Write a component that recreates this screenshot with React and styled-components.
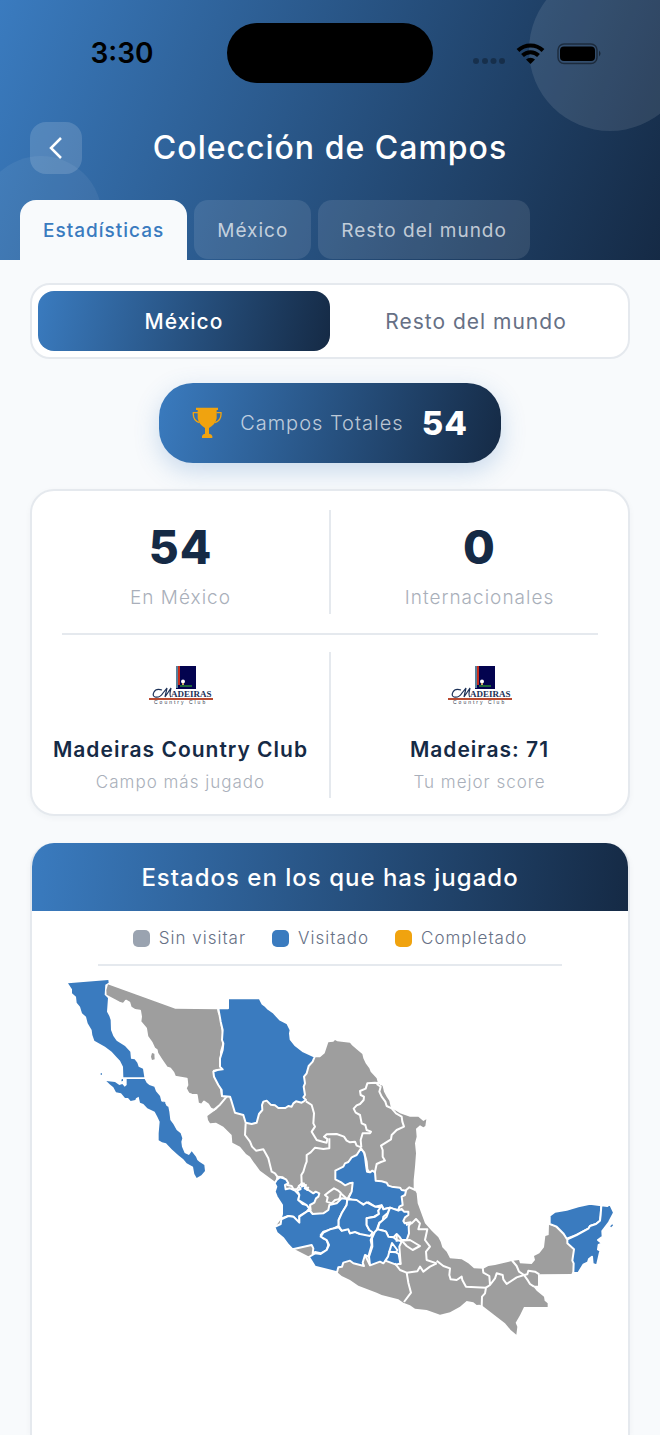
import React, { useState } from 'react';
import styled, { createGlobalStyle, css } from 'styled-components';

const palette = {
  blue: '#3a7bbf',
  navy: '#152a45',
  page: '#f8fafc',
  border: '#e5e9ee',
  slate: '#667085',
  muted: '#a9afba',
  gray: '#9e9e9e',
  gold: '#f0a30f',
};

const gradient = (angle) =>
  `linear-gradient(${angle}deg, ${palette.blue}, ${palette.navy})`;

const GlobalStyle = createGlobalStyle`
  * {
    box-sizing: border-box;
  }
  body {
    margin: 0;
    background: ${palette.page};
    font-family: Inter, 'Liberation Sans', sans-serif;
    letter-spacing: 1px;
  }
  button {
    border: none;
    padding: 0;
    background: none;
    font: inherit;
    letter-spacing: inherit;
    cursor: pointer;
  }
  h1, h2, p {
    margin: 0;
  }
`;

const Page = styled.div`
  min-height: 100vh;
  display: flex;
  flex-direction: column;
`;

const Header = styled.header`
  position: relative;
  overflow: hidden;
  background: ${gradient(111)};
`;

const Bubble = styled.div`
  position: absolute;
  width: ${({ $size }) => $size}px;
  height: ${({ $size }) => $size}px;
  border-radius: 50%;
  background: rgba(255, 255, 255, ${({ $alpha }) => $alpha});
  ${({ $corner }) =>
    $corner === 'top'
      ? css`
          top: -31px;
          right: -31px;
        `
      : css`
          bottom: -18px;
          left: -20px;
        `}
`;

const StatusBar = styled.div`
  position: relative;
  display: grid;
  grid-template-columns: 1fr 206px 1fr;
  align-items: center;
  padding-top: 23px;
`;

const Clock = styled.time`
  justify-self: center;
  padding-left: 17px;
  font-size: 28px;
  line-height: 60px;
  font-weight: 600;
  letter-spacing: 0;
`;

const Island = styled.div`
  height: 60px;
  border-radius: 30px;
  background: #000;
`;

const StatusIcons = styled.div`
  display: flex;
  align-items: center;
  padding: 2px 0 0 39px;
`;

const TitleRow = styled.div`
  position: relative;
  display: grid;
  grid-template-columns: 52px 1fr 52px;
  align-items: center;
  padding: 39px 30px 26px;
`;

const BackButton = styled.button`
  height: 52px;
  display: flex;
  align-items: center;
  justify-content: center;
  border-radius: 16px;
  background: rgba(255, 255, 255, 0.15);
`;

const Title = styled.h1`
  text-align: center;
  color: white;
  font-size: 32px;
  line-height: 40px;
  font-weight: 500;
`;

const Tabs = styled.nav`
  position: relative;
  display: flex;
  gap: 7px;
  padding: 0 20px;
`;

const Tab = styled.button`
  height: 59px;
  padding: 2px 23px 0;
  border-radius: 14px;
  background: rgba(255, 255, 255, 0.1);
  color: rgba(255, 255, 255, 0.7);
  font-size: 19px;
  line-height: 24px;
  ${({ $active }) =>
    $active &&
    css`
      border-radius: 16px 16px 0 0;
      height: 60px;
      background: ${palette.page};
      color: ${palette.blue};
      font-weight: 500;
    `}
`;

const Content = styled.main`
  flex: 1;
  display: flex;
  flex-direction: column;
  padding: 23px 30px 0;
`;

const Segment = styled.div`
  display: grid;
  grid-template-columns: 1fr 1fr;
  padding: 6px;
  border: 2px solid ${palette.border};
  border-radius: 20px;
  background: white;
`;

const SegmentButton = styled.button`
  height: 60px;
  padding-top: 2px;
  border-radius: 16px;
  color: ${palette.slate};
  font-size: 21px;
  line-height: 26px;
  ${({ $active }) =>
    $active &&
    css`
      background: ${gradient(102)};
      color: white;
      font-weight: 500;
    `}
`;

const TotalPill = styled.div`
  align-self: center;
  display: flex;
  align-items: center;
  height: 80px;
  margin: 24px 0 26px;
  padding: 0 33px;
  border-radius: 34px;
  background: ${gradient(103)};
  box-shadow: 0 8px 24px rgba(58, 123, 191, 0.25);
  color: rgba(255, 255, 255, 0.7);
  font-size: 20px;
  font-weight: 300;
  span {
    margin: 0 18px;
  }
  strong {
    color: white;
    font-size: 33px;
    font-weight: 800;
  }
`;

const Card = styled.section`
  border: 2px solid ${palette.border};
  border-radius: 24px;
  background: white;
  box-shadow: 0 2px 6px rgba(21, 42, 69, 0.04);
`;

const StatsRow = styled.div`
  display: grid;
  grid-template-columns: 1fr 2px 1fr;
  padding: ${({ $detail }) => ($detail ? '17px 0 16px' : '19px 0')};
`;

const RowDivider = styled.hr`
  height: 2px;
  margin: 0 30px;
  border: none;
  background: ${palette.border};
`;

const ColumnDivider = styled.div`
  background: ${palette.border};
`;

const Stat = styled.div`
  display: flex;
  flex-direction: column;
  align-items: center;
  text-align: center;
  color: ${palette.navy};
  svg {
    margin: 13px 0 30px;
  }
`;

const StatNumber = styled.strong`
  padding-top: 8px;
  font-size: 46px;
  line-height: 58px;
  font-weight: 800;
`;

const StatName = styled.strong`
  font-size: 21px;
  line-height: 28px;
  font-weight: 600;
`;

const StatLabel = styled.span`
  padding-top: ${({ $small }) => ($small ? 6 : 10)}px;
  padding-bottom: 4px;
  color: ${palette.muted};
  font-size: ${({ $small }) => ($small ? 17 : 19)}px;
  line-height: 24px;
  font-weight: 300;
`;

const MapCard = styled(Card)`
  flex: 1;
  margin-top: 27px;
  border-top: none;
  border-bottom: none;
  border-radius: 24px 24px 0 0;
  overflow: hidden;
  svg {
    display: block;
    width: calc(100% - 36px);
    margin: 4px 0 0 28px;
  }
`;

const MapTitle = styled.h2`
  padding-top: 1px;
  background: ${gradient(96)};
  color: white;
  text-align: center;
  font-size: 24px;
  line-height: 67px;
  font-weight: 500;
`;

const Legend = styled.ul`
  display: flex;
  justify-content: center;
  gap: 26px;
  list-style: none;
  margin: 0 66px;
  padding: 15px 0 14px;
  border-bottom: 2px solid ${palette.border};
  color: ${palette.slate};
  font-size: 17px;
  line-height: 24px;
  font-weight: 300;
`;

const LegendItem = styled.li`
  display: flex;
  align-items: center;
  gap: 9px;
  &::before {
    content: '';
    width: 17px;
    height: 17px;
    border-radius: 5px;
    background: ${({ $color }) => $color};
  }
`;

const SignalIcons = () => (
  <svg width="132" height="24" viewBox="0 0 132 24" aria-hidden="true">
    <g fill="#000" opacity="0.3">
      <circle cx="4" cy="19" r="3" />
      <circle cx="13" cy="19" r="3" />
      <circle cx="21.500" cy="19" r="3" />
      <circle cx="30" cy="19" r="3" />
    </g>
    <g fill="none" stroke="#000" strokeWidth="4">
      <path d="M46 8.500a18 18 0 0 1 25 0" />
      <path d="M50.500 13.500a11.500 11.500 0 0 1 16 0" />
    </g>
    <path d="M54 17.500a6.500 6.500 0 0 1 9 0L58.500 22z" />
    <rect x="86" y="2" width="39" height="19.500" rx="6" fill="none" stroke="#000" strokeWidth="1.500" opacity="0.45" />
    <rect x="88" y="4.500" width="35" height="14.500" rx="4" />
    <path d="M127 8.500q3 3 0 6z" opacity="0.5" />
  </svg>
);

const Trophy = () => (
  <svg width="30" height="32" viewBox="579 411 90 96" fill={palette.gold} aria-hidden="true">
    <path d="M591 413H657V420H653V445Q650 463 630 474V491Q638 492 640 498V504H609V498Q611 492 618 491V474Q599 463 596 445V420H591Z" />
    <path d="M597 428H583Q581 451 601 458M652 428H666Q668 451 648 458" fill="none" stroke={palette.gold} strokeWidth="4" />
  </svg>
);

const ClubLogo = () => (
  <svg width="66" height="41" viewBox="0 0 66 41" role="img" aria-label="Madeiras Country Club">
    <rect x="28" y="1" width="20" height="23" fill="#03034f" />
    <rect x="28" y="1" width="2" height="22" fill="#57809c" />
    <rect x="30" y="1" width="2" height="19" fill="#c62c1c" />
    <rect x="32" y="20" width="12" height="2" fill="#1d6538" />
    <circle cx="35" cy="16.500" r="2" fill="#fff" />
    <path d="M34 18h2v2h-2z" fill="#cfa36b" />
    <g fill="#1c3157" fontFamily="'Liberation Serif', serif" letterSpacing="0">
      <path d="M14 25q-6-2-8 2t1 5q5 1 8-4l4-5-2 9 6-9q-2 8 0 9" fill="none" stroke="#1c3157" strokeWidth="1.200" />
      <text x="23" y="32" fontSize="9" fontWeight="700">
        ADEIRAS
      </text>
    </g>
    <path d="M1 34h64" stroke="#b94a30" strokeWidth="2" />
    <text x="6" y="39" fontSize="5" fill="#333b4c" letterSpacing="2" fontFamily="'Liberation Sans', sans-serif">
      Country Club
    </text>
  </svg>
);

// Each group keeps its own origin, so the outlines stay in small numbers.
const MexicoMap = () => (
  <svg viewBox="180 2910 1680 1110" fill={palette.gray} role="img" aria-label="Mapa de México" strokeLinejoin="round">
    {/* mainland */}
    <g transform="translate(600 2940)">
      <path d="M22 408L30 402L50 388L80 350L200 300L342 232L360 232L374 220L378 208L385 187L400 185L405 180L412 184L450 188L456 196L470 208L487 222L490 235L497 250L508 265L512 275L530 295L533 307L548 318L552 335L560 350L568 362L573 385L588 392L600 400L630 410L655 410L670 423L679 418L676 438L670 442L660 436L648 446L650 470L645 490L648 520L645 560L641 600L641 625L650 640L653 670L675 730L695 752L715 772L722 785L727 802L740 815L750 835L785 838L805 850L822 865L850 866L865 858L885 855L935 843L957 840L960 850L995 852L1005 840L1002 828L1018 820L1032 802L1036 768L1046 765L1047 733L1065 740L1100 775L1120 808L1122 870L1114 882L1014 883L1014 917L998 917L1010 932L1032 950L1034 962L1043 970V981H972L960 1006L947 1028L952 1040L949 1064L932 1050L915 1030L880 1003L847 977L838 974L830 975L820 967L800 963L780 980L750 997L720 1004L680 990L645 986L630 976L610 968L595 958L545 945L530 938L475 917L450 900L425 888L410 875L380 868L345 858L328 830L278 805L250 775L225 742L245 715L248 675L230 650L225 605L180 572L160 545L150 530L138 522L120 500L97 488L95 465L70 440L48 428L30 430L24 420Z" />
    </g>

    {/* north west */}
    <g transform="translate(180 2910)">
      <path
        stroke="#fff"
        strokeWidth="6"
        d="M142 39L345 113L474 115L476 127L487 150L485 165L491 200L489 225L483 245L484 290L488 298L462 302L464 315L482 350L486 378L500 380L480 404L461 420L451 415L444 403L432 395L425 404L414 400L410 375L395 374L385 370L377 355L382 345L380 326L345 320L340 308L330 295L320 292L305 270L292 250L290 240L283 235L275 218L262 200L258 175L241 155L243 140L240 122L225 120L212 112L208 98L198 92L190 102L178 98L137 76L136 60Z"
      />
      <path d="M276 249L283 251L284 268L276 270L273 260Z" />
      <g fill={palette.blue}>
        <path d="M24 40L145 30L146 38L136 44L134 74L144 84L141 125L148 138L152 150L153 180L160 198L170 212L195 228L211 245L213 266L224 268L232 278L236 290L249 296L253 322H190L189 290L180 272L170 262L155 245L135 230L103 212L97 195L95 180L83 160L78 140L66 130L60 110L50 98L48 80L36 70L36 58Z" />
        <path d="M200 327H254L260 338L268 345L283 350L288 364L300 378L304 394L315 398L320 408L325 410L328 425L331 450L340 462L350 480L362 490L367 505L364 515L366 530L374 549L387 555L395 544L408 560L412 570L418 575L433 585L435 603L424 616L410 624L403 612L399 590L380 580L370 568L355 556L335 538L318 520L306 517L296 511L296 490L299 455L292 440L284 425L262 415L250 402L240 398L236 380L228 385L226 390L212 393L204 384L195 384L183 370L168 367L160 352L149 343L139 333L165 336L178 345L187 342L194 350L200 345Z" />
        <path d="M185 328l4-1v6l-5 1zM122 310h4v4h-4zM310 393l7 5-4 2z" />
      </g>
    </g>

    <g transform="translate(600 2940)" fill="none" stroke="#fff" strokeWidth="6">
      <path
        fill={palette.blue}
        d="M55 85H84V55H179L187 71L195 77L205 87L220 97L240 119L262 130L272 150L270 160L272 178L285 195L310 214L344 230L338 245L326 258L320 280L312 290L315 310L311 320L315 345L310 352L318 360L305 368L288 364L280 370L275 380L265 378L256 384L235 384L225 376L212 374L200 362L190 365L186 375L187 390L177 402L170 428L155 432L137 428L130 405L105 398L95 365L90 350L66 348L65 330L55 315L42 290L40 275L52 270L68 268L60 260L60 235L68 210L70 190L66 180L68 150L62 125Z"
      />
      <path d="M137 430L135 465L150 485L156 500L168 512L190 508L198 522L205 535L215 575L225 580L232 590L230 608" />
      <path d="M318 364L335 375L342 400L340 430L345 440L335 455L350 480L368 485L380 488L382 477L372 470L380 463L410 462L432 470L440 482L450 487L465 485L470 497L484 502" />
      <path d="M388 475L388 505L370 507L345 503L332 517L320 525L320 545L316 555L310 575L304 585L305 610L290 628L280 627L275 618L262 615L258 600L248 592L232 590" />
      <path d="M545 315L540 310L525 308L502 310L497 326L480 333L482 345L492 350L491 360L480 372L470 376L461 386L467 398L480 405L485 430L496 435L500 450L513 455L510 460L488 460L482 480L484 502" />
      <path d="M530 312L542 320L538 335L545 350L556 365L560 378L575 385L588 400L605 410L607 425L612 440L590 450L575 465L573 478L543 497L548 510L548 530L555 542L543 546L530 552L525 575L508 577L502 568L500 545L492 515" />
    </g>

    {/* center */}
    <g transform="translate(780 3420)" fill="none" stroke="#fff" strokeWidth="6">
      <g fill={palette.blue}>
        <path d="M303 25L312 38L315 50L318 75L321 95L330 97L337 92L345 97L347 122L365 124L380 128L385 137L395 140L420 143L425 150L438 152L435 165L425 170L428 195L418 200L415 210L400 207L390 203L370 208L365 196L345 200L325 187L315 194L290 185L265 175L275 155L278 128L268 130L255 136L245 128L226 118L226 92L250 80L255 70L265 66L275 52L290 45Z" />
        <path d="M50 120L60 112L70 115L78 118L85 130L75 135L77 148L90 145L105 152L118 165L115 180L128 192L140 195L148 205L140 215L118 228L118 248L100 230L85 228L62 236L66 222V195L50 170L44 155L49 140L44 130Z" />
        <path d="M112 152L122 147L116 138L128 130L125 140L138 135L134 145L145 150L160 160L167 155L178 160L175 170L168 175L163 188L150 195L152 210L140 195L115 180L118 165Z" />
        <path d="M43 261L62 252L64 238L85 228L100 230L118 248L118 230L148 210L158 222L190 220L205 210L208 195L230 190L245 175L262 177L260 195L245 220L236 240V258L220 266L190 275L182 285L188 294L200 300L205 315L200 330L182 340L165 336L158 340L160 325L155 315L98 328L85 315L70 295L50 278Z" />
        <path d="M147 351L165 340L182 342L200 330L207 315L200 300L182 290L190 278L210 268L236 262L245 272L265 265L270 280L285 275L300 282L315 280L338 285L332 300L335 315L325 350L315 345L308 368L312 378L280 370L270 362L250 368L246 380L235 382L231 397L165 380Z" />
        <path d="M262 178L290 180L310 194L320 187L345 200L368 202L355 212L357 222L342 230L320 235L320 255L328 270L340 275L330 288L300 282L285 276L270 280L265 268L245 272L236 258L236 240L245 220L260 195Z" />
        <path d="M365 196L370 208L390 203L384 218L370 230L368 243L358 248L350 270L342 280L328 270L320 255L320 235L345 230L357 222L355 212Z" />
        <path d="M390 203L415 212L425 207L432 215H445V225L435 232L430 243L434 250L452 247L446 260L447 280L440 300L425 300L418 290L410 282L400 292L385 290L378 275L370 272L353 268L358 250L380 230Z" />
        <path d="M345 275L353 268L370 272L378 275L385 290L400 292L410 300L425 304L418 320L422 372L405 370L390 358L378 360L370 370L360 365L330 376L327 350L337 320L336 295Z" />
        <path d="M396 309L412 330L408 337L388 335Z" />
        <path d="M388 335L384 350L376 362L408 374L421 370L416 342L408 337Z" />
      </g>
      <path fill={palette.gray} d="M195 165L208 155L222 145L235 152L242 158L240 172L236 178L225 180L215 190L200 185L203 172Z" />
      <path d="M242 160L262 178M262 178L272 160M315 345L330 376M405 370L420 390L440 398L472 394L480 380L490 395L510 380L530 370M436 152L448 142L466 150M410 282V305M130 128L142 150L145 140" />
      <path d="M438 255L455 250L468 237L480 250L475 268L502 268L495 300L510 320L498 335L500 360L530 370" />
      <path d="M425 302L450 300L480 318L458 330L440 318Z" />
      <path d="M440 398L445 428L453 458L432 486" />
    </g>

    {/* south east */}
    <g transform="translate(1200 3480)" fill="none" stroke="#fff" strokeWidth="6">
      <path d="M110 302L130 318L150 325L148 345L152 358L170 360L185 350L187 360L198 380L258 383" />
      <path d="M248 322L250 338L268 348L270 375L258 383L255 400L246 410L245 440M270 375L285 355L290 340L308 345L310 358L320 372L350 352L372 345" />
      <path d="M335 300L350 318L357 335L372 345L382 343L385 332L405 335L418 343M372 345L384 362L390 372L402 380" />
      <g fill={palette.blue}>
        <path d="M449 192V167L465 155L500 149L535 139L570 131L604 136L602 165L600 182L588 192L570 198L565 206L530 225L500 236L490 220L470 200Z" />
        <path d="M604 136L622 138L630 132L642 158L627 187L607 213L608 230L594 240L606 250L596 255L594 268L601 272L591 316L578 312L576 290L567 297L564 307L550 314L535 339L520 338L521 310L517 302L522 268L502 250V238L530 225L565 206L570 198L588 192L600 182L602 165Z" />
      </g>
      <path d="M632 200l6-6" stroke={palette.blue} strokeWidth="4" />
    </g>
  </svg>
);

const TABS = ['Estadísticas', 'México', 'Resto del mundo'];
const REGIONS = ['México', 'Resto del mundo'];
const LEGEND = [
  { label: 'Sin visitar', color: '#9aa3b0' },
  { label: 'Visitado', color: palette.blue },
  { label: 'Completado', color: palette.gold },
];

const App = () => {
  const [tab, setTab] = useState(TABS[0]);
  const [region, setRegion] = useState(REGIONS[0]);

  return (
    <Page>
      <GlobalStyle />
      <Header>
        <Bubble $corner="top" $size={162} $alpha={0.1} />
        <Bubble $corner="bottom" $size={122} $alpha={0.06} />
        <StatusBar>
          <Clock>3:30</Clock>
          <Island />
          <StatusIcons>
            <SignalIcons />
          </StatusIcons>
        </StatusBar>
        <TitleRow>
          <BackButton type="button" aria-label="Volver">
            <svg width="14" height="22" viewBox="0 0 14 22" fill="none" stroke="#fff" strokeWidth="2.500">
              <path d="M12 1L2 11L12 21" />
            </svg>
          </BackButton>
          <Title>Colección de Campos</Title>
        </TitleRow>
        <Tabs>
          {TABS.map((name) => (
            <Tab key={name} type="button" $active={name === tab} onClick={() => setTab(name)}>
              {name}
            </Tab>
          ))}
        </Tabs>
      </Header>

      <Content>
        <Segment>
          {REGIONS.map((name) => (
            <SegmentButton key={name} type="button" $active={name === region} onClick={() => setRegion(name)}>
              {name}
            </SegmentButton>
          ))}
        </Segment>

        <TotalPill>
          <Trophy />
          <span>Campos Totales</span>
          <strong>54</strong>
        </TotalPill>

        <Card>
          <StatsRow>
            <Stat>
              <StatNumber>54</StatNumber>
              <StatLabel>En México</StatLabel>
            </Stat>
            <ColumnDivider />
            <Stat>
              <StatNumber>0</StatNumber>
              <StatLabel>Internacionales</StatLabel>
            </Stat>
          </StatsRow>
          <RowDivider />
          <StatsRow $detail>
            <Stat>
              <ClubLogo />
              <StatName>Madeiras Country Club</StatName>
              <StatLabel $small>Campo más jugado</StatLabel>
            </Stat>
            <ColumnDivider />
            <Stat>
              <ClubLogo />
              <StatName>Madeiras: 71</StatName>
              <StatLabel $small>Tu mejor score</StatLabel>
            </Stat>
          </StatsRow>
        </Card>

        <MapCard>
          <MapTitle>Estados en los que has jugado</MapTitle>
          <Legend>
            {LEGEND.map(({ label, color }) => (
              <LegendItem key={label} $color={color}>
                {label}
              </LegendItem>
            ))}
          </Legend>
          <MexicoMap />
        </MapCard>
      </Content>
    </Page>
  );
};

export default App;
